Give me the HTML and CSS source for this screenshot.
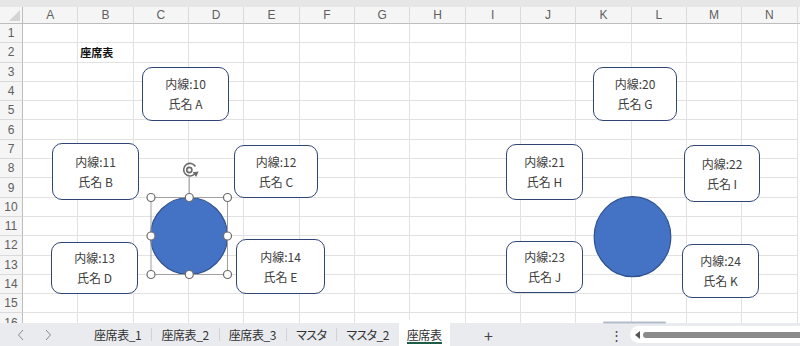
FILE: index.html
```html
<!DOCTYPE html>
<html lang="ja">
<head>
  <meta charset="UTF-8" />
  <title>座席表</title>
  <link rel="stylesheet" href="styles.css">
</head>
<body>

  <div class="top-strip"></div>
  <div id="sheet" class="sheet"></div>

  <!-- shapes placed on the sheet -->
  <div class="shapes">
    <div class="seat seat-a"><span>内線:10</span><span>氏名 A</span></div>
    <div class="seat seat-b"><span>内線:11</span><span>氏名 B</span></div>
    <div class="seat seat-c"><span>内線:12</span><span>氏名 C</span></div>
    <div class="seat seat-d"><span>内線:13</span><span>氏名 D</span></div>
    <div class="seat seat-e"><span>内線:14</span><span>氏名 E</span></div>
    <div class="seat seat-g"><span>内線:20</span><span>氏名 G</span></div>
    <div class="seat seat-h"><span>内線:21</span><span>氏名 H</span></div>
    <div class="seat seat-i"><span>内線:22</span><span>氏名 I</span></div>
    <div class="seat seat-j"><span>内線:23</span><span>氏名 J</span></div>
    <div class="seat seat-k"><span>内線:24</span><span>氏名 K</span></div>

    <svg class="overlay" width="800" height="346" viewBox="0 0 800 346">
      <!-- left table (selected) -->
      <circle cx="189" cy="236" r="38.5" fill="#4472c4" stroke="#2f528f" stroke-width="1.2"/>
      <rect x="151" y="197.5" width="76.5" height="77" fill="none" stroke="#a0a0a0" stroke-width="1"/>
      <line x1="189.3" y1="177" x2="189.3" y2="197" stroke="#a0a0a0" stroke-width="1"/>
      <g fill="#fff" stroke="#6b6b6b" stroke-width="1.2">
        <circle cx="151" cy="197.5" r="4"/>
        <circle cx="189.3" cy="197.5" r="4"/>
        <circle cx="227.5" cy="197.5" r="4"/>
        <circle cx="151" cy="236" r="4"/>
        <circle cx="227.5" cy="236" r="4"/>
        <circle cx="151" cy="274.5" r="4"/>
        <circle cx="189.3" cy="274.5" r="4"/>
        <circle cx="227.5" cy="274.5" r="4"/>
      </g>
      <!-- rotate handle -->
      <g fill="none" stroke="#6b6b6b" stroke-width="1.6">
        <path d="M194.8 173.8 A6.3 6.3 0 1 1 195.4 166.5"/>
        <circle cx="189.3" cy="170" r="2.6"/>
      </g>
      <path d="M192.6 172.2 L198.6 171.4 L196.2 177 Z" fill="#6b6b6b"/>

      <!-- right table -->
      <ellipse cx="632.5" cy="236.7" rx="38.3" ry="40" fill="#4472c4" stroke="#2f528f" stroke-width="1.2"/>

      <!-- top edge of a shape below the view -->
      <rect x="603" y="321.5" width="63" height="2" rx="1" fill="#b3bbcb"/>
    </svg>
  </div>

  <div class="tabbar">
    <div class="nav">
      <svg width="8" height="12" viewBox="0 0 8 12"><path d="M6 1 L1.5 6 L6 11" fill="none" stroke="#8a8a8a" stroke-width="1"/></svg>
      <svg width="8" height="12" viewBox="0 0 8 12"><path d="M2 1 L6.5 6 L2 11" fill="none" stroke="#8a8a8a" stroke-width="1"/></svg>
    </div>
    <div class="tab">座席表_1</div>
    <div class="tab">座席表_2</div>
    <div class="tab">座席表_3</div>
    <div class="tab kana">マスタ</div>
    <div class="tab kana">マスタ_2</div>
    <div class="tab active"><span class="tab-label">座席表</span></div>
    <div class="add">+</div>
    <div class="more">⋮</div>
    <div class="hscroll">
      <svg width="8" height="10" viewBox="0 0 8 10"><path d="M7 1 L2 5 L7 9 Z" fill="#555"/></svg>
      <div class="thumb"></div>
    </div>
  </div>

<script>
  const sheet = document.getElementById('sheet');
  const cols = 'ABCDEFGHIJKLMN'.split('');

  const corner = document.createElement('div');
  corner.className = 'corner';
  sheet.appendChild(corner);

  cols.forEach(c => {
    const head = document.createElement('div');
    head.className = 'col-head';
    head.textContent = c;
    sheet.appendChild(head);
  });

  for (let r = 1; r <= 16; r++) {
    const rowHead = document.createElement('div');
    rowHead.className = 'row-head';
    rowHead.textContent = r;
    sheet.appendChild(rowHead);

    cols.forEach(c => {
      const cell = document.createElement('div');
      cell.className = 'cell';
      if (r === 2 && c === 'B') {
        cell.classList.add('title');
        cell.textContent = '座席表';
      }
      sheet.appendChild(cell);
    });
  }
</script>

</body>
</html>
```

FILE: styles.css
```css
body {
  margin: 0;
  width: 800px;
  height: 346px;
  overflow: hidden;
  position: relative;
  background: #fff;
  font-family: "Noto Sans CJK JP", "Noto Sans", sans-serif;
}
.top-strip {
  height: 7px;
  background: #e6e6e6;
}
.sheet {
  display: grid;
  grid-template-columns: 23px repeat(14, 55.33px);
  grid-template-rows: 17px repeat(16, 19.3px);
  height: 316px;
  overflow: hidden;
  /* header band continues past the last column */
  background: linear-gradient(#f5f5f5 16px, #bdbdbd 16px, #bdbdbd 17px, #fff 17px);
}
.corner, .col-head, .row-head {
  background: #f5f5f5;
  color: #5f5f5f;
  font-family: "Liberation Sans", Arial, sans-serif;
  font-size: 12px;
  display: flex;
  align-items: center;
  justify-content: center;
  box-sizing: border-box;
}
.corner {
  position: relative;
  border-right: 1px solid #bdbdbd;
  border-bottom: 1px solid #bdbdbd;
}
.corner::after {
  content: "";
  position: absolute;
  right: 2px;
  bottom: 2px;
  width: 11px;
  height: 11px;
  background: #d4d4d4;
  clip-path: polygon(100% 0, 100% 100%, 0 100%);
}
.col-head {
  border-right: 1px solid #dadada;
  border-bottom: 1px solid #bdbdbd;
}
.row-head {
  border-right: 1px solid #bdbdbd;
  border-bottom: 1px solid #dadada;
}
.cell {
  box-sizing: border-box;
  border-right: 1px solid #e2e2e2;
  border-bottom: 1px solid #e2e2e2;
}
.title {
  font-size: 11px;
  font-weight: bold;
  color: #111;
  white-space: nowrap;
  padding-left: 2px;
  display: flex;
  align-items: center;
  overflow: visible;
}

/* shapes */
.shapes {
  position: absolute;
  left: 0;
  top: 0;
}
.seat {
  position: absolute;
  box-sizing: border-box;
  border: 1.5px solid #2f4574;
  border-radius: 10px;
  background: #fff;
  display: flex;
  flex-direction: column;
  justify-content: center;
  align-items: center;
  font-size: 12px;
  line-height: 20px;
  color: #404040;
}
.seat-a { left: 142px; top: 67px; width: 87px; height: 54px; }
.seat-b { left: 52px; top: 143px; width: 87px; height: 57px; }
.seat-c { left: 234px; top: 145px; width: 84px; height: 53px; }
.seat-d { left: 51px; top: 242px; width: 87px; height: 52px; }
.seat-e { left: 236px; top: 239px; width: 89px; height: 55px; }
.seat-g { left: 593px; top: 67px; width: 84px; height: 54px; }
.seat-h { left: 506px; top: 144px; width: 77px; height: 56px; }
.seat-i { left: 684px; top: 145px; width: 76px; height: 57px; }
.seat-j { left: 506px; top: 241px; width: 77px; height: 52px; }
.seat-k { left: 682px; top: 244px; width: 77px; height: 54px; }
.overlay {
  position: absolute;
  left: 0;
  top: 0;
  z-index: 2;
}

/* sheet tabs */
.tabbar {
  display: flex;
  height: 23px;
  background: #e9ebef;
  font-size: 12px;
  color: #333;
}
.nav {
  width: 84px;
  display: flex;
  align-items: center;
  gap: 19px;
  padding-left: 17px;
  box-sizing: border-box;
}
.tab {
  position: relative;
  display: flex;
  align-items: center;
  padding: 0 10px;
  white-space: nowrap;
  letter-spacing: -0.4px;
}
.tab.kana {
  font-feature-settings: "palt";
  letter-spacing: -0.6px;
}
.tab + .tab::before {
  content: "";
  position: absolute;
  left: 0;
  top: 5px;
  bottom: 5px;
  width: 1px;
  background: #cfd2d6;
}
.tab.active {
  background: #fff;
  margin-top: -3px;
  padding: 3px 8px 0;
  border-radius: 4px 4px 0 0;
}
.tab.active::before {
  display: none;
}
.tab-label {
  border-bottom: 2px solid #1d5d46;
  line-height: 15px;
  margin-top: 2px;
}
.add {
  width: 78px;
  display: flex;
  align-items: center;
  justify-content: center;
  font-size: 16px;
  color: #444;
}
.more {
  margin-left: auto;
  width: 14px;
  display: flex;
  align-items: center;
  justify-content: center;
  font-size: 13px;
  color: #444;
  margin-right: 7px;
}
.hscroll {
  width: 170px;
  margin: 3px 0 3px;
  background: #fff;
  border-radius: 9px 0 0 9px;
  display: flex;
  align-items: center;
  padding-left: 3px;
  box-sizing: border-box;
  gap: 2px;
}
.thumb {
  flex: 1;
  height: 6px;
  border-radius: 3px 0 0 3px;
  background: #8a8a8a;
}
```
